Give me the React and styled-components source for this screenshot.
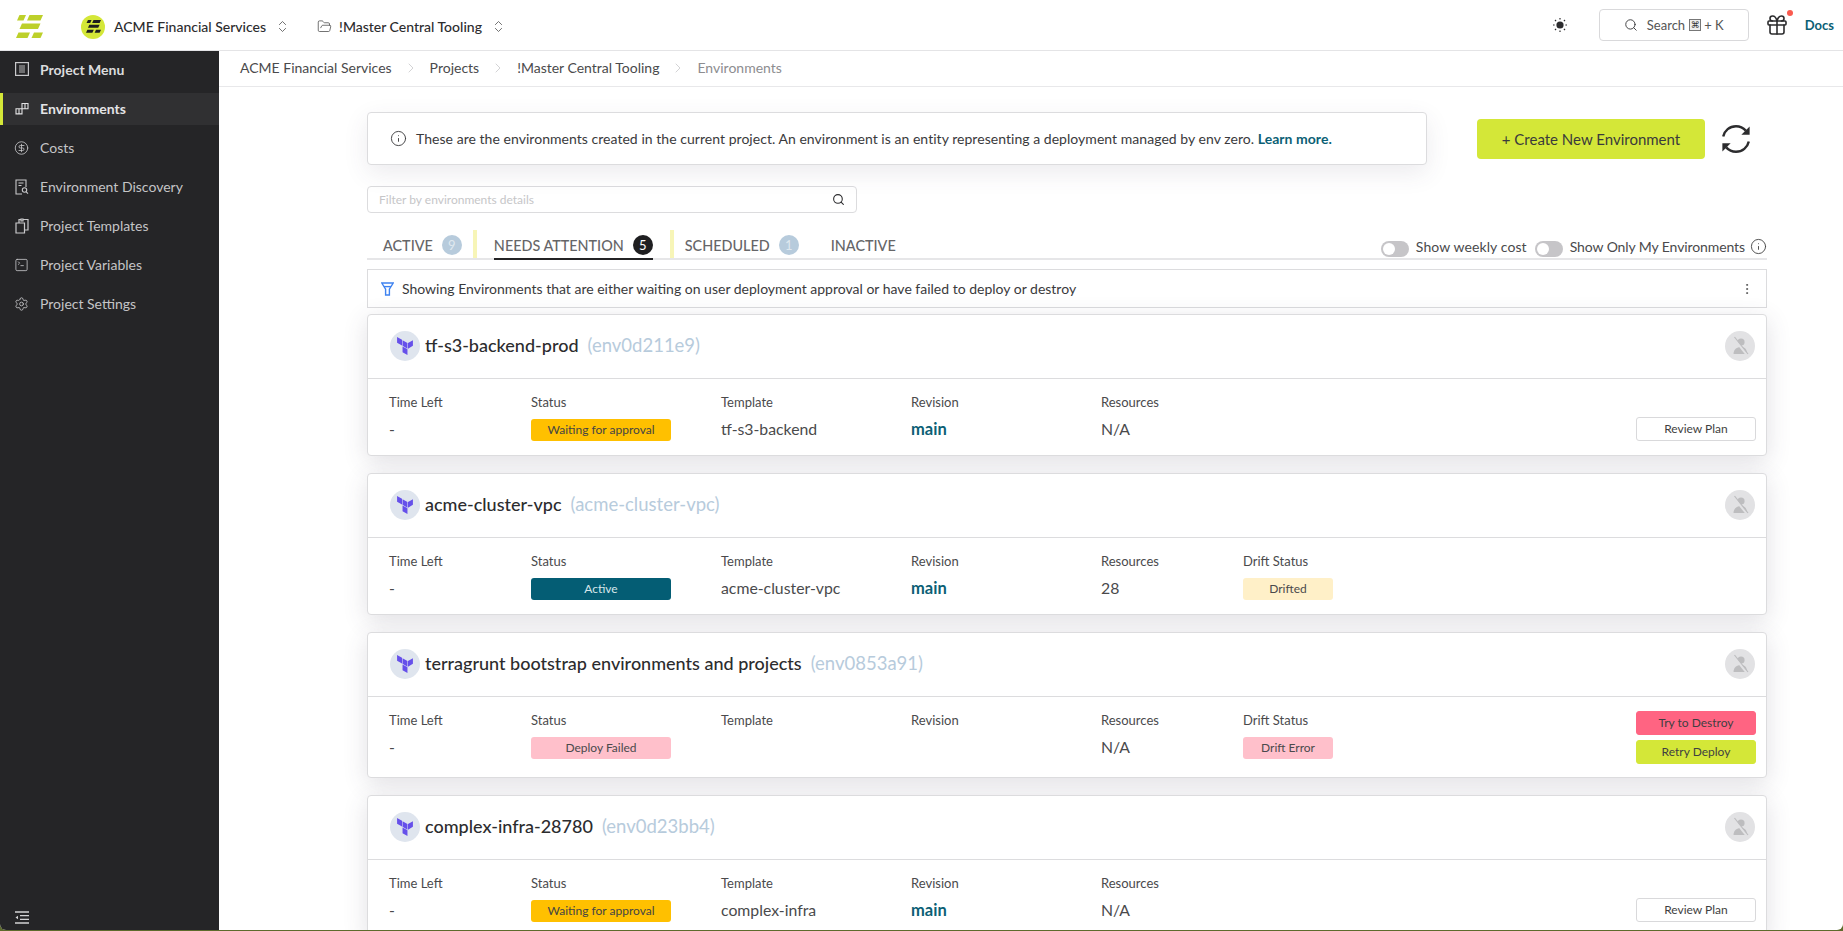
import React from 'react';
import styled, { createGlobalStyle } from 'styled-components';
import {
  ChevronRight,
  ChevronsUpDown,
  CircleDollarSign,
  EllipsisVertical,
  FolderOpen,
  Gift,
  Info,
  Search,
  Settings,
  SquareTerminal,
} from 'lucide-react';

const GlobalStyle = createGlobalStyle`
  html, body {
    margin: 0;
    height: 100%;
    overflow: hidden;
    background: #5d6b2c;
  }
  * {
    box-sizing: border-box;
  }
  body {
    font-family: Lato, "Liberation Sans", sans-serif;
    color: #2c2c2e;
  }
`;

const LogoMark = ({ size = 27, color = '#bdd02a' }) => (
  <svg width={size} height={(size * 23) / 27} viewBox="0 0 27 23" fill={color}>
    <path d="M3.5 0H10L7.5 5.5H1z" />
    <path d="M13.5 0H27l-2.5 5.5H11z" />
    <path d="M6 8.5h18.5L22 14H3.5z" />
    <path d="M2.5 17.5H14L11.5 23H0z" />
    <path d="M18 17.5h9L24.5 23H15.5z" />
  </svg>
);

const TerraformMark = () => (
  <svg width="18" height="18" viewBox="0 0 24 24" fill="#6650ea">
    <path d="M1.44 0v7.575l6.561 3.79V3.787zm21.12 4.227l-6.561 3.791v7.574l6.56-3.787zM8.72 4.23v7.575l6.561 3.787V8.018zm0 8.405v7.575L15.28 24v-7.578z" />
  </svg>
);

const NoUserMark = () => (
  <svg width="22" height="22" viewBox="0 0 22 22">
    <circle cx="12" cy="7" r="3.6" fill="#bdbdbf" />
    <path d="M4.5 19c0-4.4 3.4-7 7.5-7s6 2.6 6 7z" fill="#bdbdbf" />
    <path d="M4 2.5L18.5 20.5" stroke="#e2e2e4" strokeWidth="2.4" />
    <path d="M5.5 2L19 19" stroke="#bdbdbf" strokeWidth="1.2" />
  </svg>
);

const MenuIcon = () => (
  <svg width="14" height="14" viewBox="0 0 14 14" fill="none" stroke="#c9c9cb" strokeWidth="1.2">
    <rect x="0.6" y="0.6" width="12.8" height="12.8" />
    <path d="M4 4h6M4 6h6M4 8h6M4 10h6" strokeWidth="0.9" />
  </svg>
);

const BlocksIcon = () => (
  <svg width="14" height="14" viewBox="0 0 14 14" fill="none" stroke="#e2e2e4" strokeWidth="1.1">
    <path d="M7 1.5h6v5.2H7zM1 6.7h6v5.2H1zM7 6.7v5.2h-.1M10 1.5v5.2M4 6.7v5.2" />
  </svg>
);

const DiscoveryIcon = () => (
  <svg width="14" height="16" viewBox="0 0 14 16" fill="none" stroke="#c9c9cb" strokeWidth="1.1">
    <path d="M7 15H1V1h10v7" />
    <path d="M3.5 4h5M3.5 6.5h3" />
    <circle cx="9.5" cy="11" r="2.2" />
    <path d="M11.2 12.8l1.8 1.8" />
  </svg>
);

const TemplatesIcon = () => (
  <svg width="14" height="16" viewBox="0 0 14 16" fill="none" stroke="#c9c9cb" strokeWidth="1.2">
    <path d="M1 5h8.5v10H1z" />
    <path d="M4 5V1.5h2M8 1.5h5V12h-3.5" />
    <path d="M6 1h2v2H6z" />
  </svg>
);

const CollapseIcon = () => (
  <svg width="14" height="13" viewBox="0 0 14 13" fill="none" stroke="#d2d2d4" strokeWidth="1.3">
    <path d="M0 1h14M5 4.7h9M5 8.3h9M0 12h14" />
    <path d="M0.5 6.5L3 4.8v3.4z" fill="#d2d2d4" stroke="none" />
  </svg>
);

const SunIcon = () => (
  <svg width="14" height="14" viewBox="0 0 14 14" fill="#2c2c2e">
    <circle cx="7" cy="7" r="3.6" />
    <g stroke="#2c2c2e" strokeWidth="1.2">
      <path d="M7 0v1.6M7 12.4V14M0 7h1.6M12.4 7H14M2 2l1.1 1.1M10.9 10.9L12 12M2 12l1.1-1.1M10.9 3.1L12 2" />
    </g>
  </svg>
);

const RefreshIcon = () => (
  <svg width="30" height="30" viewBox="0 0 30 30" fill="none" stroke="#2c2c2e" strokeWidth="2.4">
    <path d="M2.2 12.5C3.5 6.5 8.6 2.2 15 2.2c3.9 0 7.4 1.7 9.8 4.4" />
    <path d="M27.8 17.5C26.5 23.5 21.4 27.8 15 27.8c-3.9 0-7.4-1.7-9.8-4.4" />
    <path d="M28.6 2.6v8.2h-8.2z" fill="#2c2c2e" stroke="none" />
    <path d="M1.4 27.4v-8.2h8.2z" fill="#2c2c2e" stroke="none" />
  </svg>
);

const FunnelIcon = () => (
  <svg width="13" height="14" viewBox="0 0 13 14" fill="none" stroke="#3f83f0" strokeWidth="1.4">
    <path d="M0.8 1h11.4L8.4 7.2v5.8H4.6V7.2z" />
    <path d="M3 4.6h7" />
  </svg>
);

const NAV_ITEMS = [
  { label: 'Environments', icon: <BlocksIcon />, active: true },
  { label: 'Costs', icon: <CircleDollarSign size={16} strokeWidth={1.3} /> },
  { label: 'Environment Discovery', icon: <DiscoveryIcon /> },
  { label: 'Project Templates', icon: <TemplatesIcon /> },
  { label: 'Project Variables', icon: <SquareTerminal size={16} strokeWidth={1.3} /> },
  { label: 'Project Settings', icon: <Settings size={16} strokeWidth={1.3} /> },
];

const CARDS = [
  {
    name: 'tf-s3-backend-prod',
    id: '(env0d211e9)',
    status: 'Waiting for approval',
    tone: 'waiting',
    template: 'tf-s3-backend',
    revision: 'main',
    resources: 'N/A',
    actions: [{ label: 'Review Plan', kind: 'plain' }],
  },
  {
    name: 'acme-cluster-vpc',
    id: '(acme-cluster-vpc)',
    status: 'Active',
    tone: 'active',
    template: 'acme-cluster-vpc',
    revision: 'main',
    resources: '28',
    drift: 'Drifted',
    driftTone: 'drifted',
    actions: [],
  },
  {
    name: 'terragrunt bootstrap environments and projects',
    id: '(env0853a91)',
    status: 'Deploy Failed',
    tone: 'failed',
    template: '',
    revision: '',
    resources: 'N/A',
    drift: 'Drift Error',
    driftTone: 'failed',
    actions: [
      { label: 'Try to Destroy', kind: 'danger' },
      { label: 'Retry Deploy', kind: 'lime' },
    ],
  },
  {
    name: 'complex-infra-28780',
    id: '(env0d23bb4)',
    status: 'Waiting for approval',
    tone: 'waiting',
    template: 'complex-infra',
    revision: 'main',
    resources: 'N/A',
    actions: [{ label: 'Review Plan', kind: 'plain' }],
  },
];

const EnvironmentCard = ({ env }) => (
  <Card>
    <CardHeader>
      <TypeCircle>
        <TerraformMark />
      </TypeCircle>
      <CardTitle>{env.name}</CardTitle>
      <CardId>{env.id}</CardId>
      <UserCircle>
        <NoUserMark />
      </UserCircle>
    </CardHeader>
    <CardBody>
      <Field $width={142}>
        <FieldLabel>Time Left</FieldLabel>
        <FieldValue>-</FieldValue>
      </Field>
      <Field $width={190}>
        <FieldLabel>Status</FieldLabel>
        <Badge $tone={env.tone} $width={140}>
          {env.status}
        </Badge>
      </Field>
      <Field $width={190}>
        <FieldLabel>Template</FieldLabel>
        <FieldValue>{env.template}</FieldValue>
      </Field>
      <Field $width={190}>
        <FieldLabel>Revision</FieldLabel>
        <RevisionValue>{env.revision}</RevisionValue>
      </Field>
      <Field $width={142}>
        <FieldLabel>Resources</FieldLabel>
        <FieldValue>{env.resources}</FieldValue>
      </Field>
      {env.drift && (
        <Field $width={142}>
          <FieldLabel>Drift Status</FieldLabel>
          <Badge $tone={env.driftTone} $width={90}>
            {env.drift}
          </Badge>
        </Field>
      )}
      <Actions $stacked={env.actions.length > 1}>
        {env.actions.map((action) => (
          <ActionButton key={action.label} $kind={action.kind}>
            {action.label}
          </ActionButton>
        ))}
      </Actions>
    </CardBody>
  </Card>
);

const App = () => (
  <>
    <GlobalStyle />
    <Frame>
      <TopBar>
        <LogoSlot>
          <LogoMark />
        </LogoSlot>
        <OrgAvatar>
          <LogoMark size={15} color="#1d1d1f" />
        </OrgAvatar>
        <TopLabel>ACME Financial Services</TopLabel>
        <Chevrons>
          <ChevronsUpDown size={15} strokeWidth={1.2} />
        </Chevrons>
        <FolderSlot>
          <FolderOpen size={15} strokeWidth={1.2} />
        </FolderSlot>
        <TopLabel>!Master Central Tooling</TopLabel>
        <Chevrons>
          <ChevronsUpDown size={15} strokeWidth={1.2} />
        </Chevrons>
        <TopRight>
          <SunIcon />
          <SearchButton>
            <SearchGlyph>
              <Search size={14} strokeWidth={1.6} />
            </SearchGlyph>
            <span>Search</span>
            <KeyCap>⌘</KeyCap>
            <span>+ K</span>
          </SearchButton>
          <GiftSlot>
            <Gift size={24} strokeWidth={1.6} />
            <GiftDot />
          </GiftSlot>
          <DocsLink>Docs</DocsLink>
        </TopRight>
      </TopBar>
      <Layout>
        <Sidebar>
          <MenuTitle>
            <NavIcon>
              <MenuIcon />
            </NavIcon>
            Project Menu
          </MenuTitle>
          {NAV_ITEMS.map((item) => (
            <NavItem key={item.label} $active={item.active}>
              <NavIcon>{item.icon}</NavIcon>
              <NavLabel>{item.label}</NavLabel>
            </NavItem>
          ))}
          <CollapseSlot>
            <CollapseIcon />
          </CollapseSlot>
        </Sidebar>
        <Main>
          <Breadcrumbs>
            <Crumb>ACME Financial Services</Crumb>
            <CrumbSep>
              <ChevronRight size={16} strokeWidth={1} />
            </CrumbSep>
            <Crumb>Projects</Crumb>
            <CrumbSep>
              <ChevronRight size={16} strokeWidth={1} />
            </CrumbSep>
            <Crumb>!Master Central Tooling</Crumb>
            <CrumbSep>
              <ChevronRight size={16} strokeWidth={1} />
            </CrumbSep>
            <Crumb $current>Environments</Crumb>
          </Breadcrumbs>
          <Content>
            <HeadRow>
              <InfoBox>
                <Info size={17} strokeWidth={1.3} />
                <span>
                  These are the environments created in the current project. An environment is an entity representing a
                  deployment managed by env zero. <LearnMore>Learn more.</LearnMore>
                </span>
              </InfoBox>
              <CreateButton>+ Create New Environment</CreateButton>
              <RefreshSlot>
                <RefreshIcon />
              </RefreshSlot>
            </HeadRow>
            <FilterBox>
              <FilterText>Filter by environments details</FilterText>
              <Search size={13} strokeWidth={2} color="#2c2c2e" />
            </FilterBox>
            <TabBar>
              <Tab $left={16}>
                ACTIVE
                <CountBadge>9</CountBadge>
              </Tab>
              <TabDivider $before={11} $after={17} />
              <Tab $active>
                NEEDS ATTENTION
                <CountBadge $dark>5</CountBadge>
              </Tab>
              <TabDivider $before={17} $after={11} />
              <Tab>
                SCHEDULED
                <CountBadge>1</CountBadge>
              </Tab>
              <Tab $left={32}>INACTIVE</Tab>
              <TabControls>
                <ToggleTrack>
                  <ToggleKnob />
                </ToggleTrack>
                <ToggleText $spacing={0.1}>Show weekly cost</ToggleText>
                <ToggleTrack $left={8}>
                  <ToggleKnob />
                </ToggleTrack>
                <ToggleText $spacing={-0.1}>Show Only My Environments</ToggleText>
                <HelpIcon>
                  <Info size={17} strokeWidth={1.3} />
                </HelpIcon>
              </TabControls>
            </TabBar>
            <Notice>
              <FunnelIcon />
              <NoticeText>
                Showing Environments that are either waiting on user deployment approval or have failed to deploy or
                destroy
              </NoticeText>
              <EllipsisVertical size={14} strokeWidth={1.6} color="#555" />
            </Notice>
            <CardList>
              {CARDS.map((env) => (
                <EnvironmentCard key={env.name} env={env} />
              ))}
            </CardList>
          </Content>
        </Main>
      </Layout>
    </Frame>
  </>
);

export default App;

const Frame = styled.div`
  display: flex;
  flex-direction: column;
  width: 1843px;
  height: 930px;
  overflow: hidden;
  background: #fff;
  border-radius: 0 0 6px 6px;
`;

const TopBar = styled.header`
  display: flex;
  align-items: center;
  flex: none;
  height: 51px;
  padding: 3px 9px 0 0;
  border-bottom: 1px solid #e4e4e6;
  background: #fff;
`;

const LogoSlot = styled.div`
  display: flex;
  align-items: center;
  width: 81px;
  padding-left: 16px;
`;

const OrgAvatar = styled.div`
  display: flex;
  align-items: center;
  justify-content: center;
  width: 24px;
  height: 24px;
  margin-right: 9px;
  border-radius: 50%;
  background: #d4e738;
`;

const TopLabel = styled.span`
  font-size: 14px;
  font-weight: 500;
  color: #2c2c2e;
  white-space: nowrap;
`;

const Chevrons = styled.span`
  display: flex;
  margin-left: 9px;
  color: #444;
`;

const FolderSlot = styled.span`
  display: flex;
  margin: 0 7px 0 27px;
  color: #444;
`;

const TopRight = styled.div`
  display: flex;
  align-items: center;
  margin: 0 0 3px auto;
`;

const SearchButton = styled.div`
  display: flex;
  align-items: center;
  justify-content: center;
  gap: 4px;
  width: 150px;
  height: 32px;
  margin-left: 32px;
  border: 1px solid #d9d9db;
  border-radius: 4px;
  font-size: 13px;
  color: #555;
`;

const SearchGlyph = styled.span`
  display: flex;
  margin-right: 5px;
  color: #3a3a3c;
`;

const KeyCap = styled.span`
  display: flex;
  align-items: center;
  justify-content: center;
  width: 12px;
  height: 12px;
  margin-right: -1px;
  border: 1px solid #777;
  background: #eee;
  font-family: "DejaVu Sans", sans-serif;
  font-size: 9px;
  color: #333;
`;

const GiftSlot = styled.div`
  position: relative;
  display: flex;
  margin-left: 16px;
  color: #2c2c2e;
`;

const GiftDot = styled.span`
  position: absolute;
  top: -3px;
  right: -4px;
  width: 6px;
  height: 6px;
  border-radius: 50%;
  background: #fa5a4f;
`;

const DocsLink = styled.span`
  margin-left: 16px;
  font-size: 13px;
  font-weight: 700;
  color: #0c5f75;
`;

const Layout = styled.div`
  display: flex;
  flex: 1;
  min-height: 0;
`;

const Sidebar = styled.aside`
  position: relative;
  flex: none;
  width: 219px;
  background: #252527;
`;

const NavIcon = styled.span`
  display: flex;
  align-items: center;
  justify-content: center;
  flex: none;
  width: 15px;
  margin-right: 11px;
`;

const NavLabel = styled.span`
  margin-bottom: 2px;
`;

const MenuTitle = styled.div`
  display: flex;
  align-items: center;
  height: 42px;
  padding: 0 0 6px 14px;
  font-size: 14px;
  font-weight: 700;
  color: #dcdcde;
`;

const NavItem = styled.div`
  display: flex;
  align-items: center;
  height: 32px;
  margin-bottom: 7px;
  padding-left: ${(p) => (p.$active ? '11px' : '14px')};
  border-left: ${(p) => (p.$active ? '3px solid #d4e738' : 'none')};
  background: ${(p) => (p.$active ? '#303032' : 'transparent')};
  font-size: 14px;
  font-weight: ${(p) => (p.$active ? 700 : 400)};
  color: ${(p) => (p.$active ? '#e4e4e6' : '#c4c4c6')};
  svg {
    color: #c9c9cb;
  }
`;

const CollapseSlot = styled.div`
  position: absolute;
  left: 15px;
  bottom: 6px;
  display: flex;
`;

const Main = styled.main`
  display: flex;
  flex-direction: column;
  flex: 1;
  min-width: 0;
`;

const Breadcrumbs = styled.nav`
  display: flex;
  align-items: center;
  flex: none;
  height: 36px;
  padding: 0 0 2px 21px;
  border-bottom: 1px solid #e8e8ea;
`;

const Crumb = styled.span`
  font-size: 14px;
  color: ${(p) => (p.$current ? '#8d8d90' : '#4a4a4c')};
`;

const CrumbSep = styled.span`
  display: flex;
  justify-content: center;
  width: 38px;
  color: #bdbdbf;
`;

const Content = styled.div`
  flex: 1;
  min-height: 0;
  padding: 25px 76px 0 148px;
`;

const HeadRow = styled.div`
  display: flex;
  align-items: center;
`;

const InfoBox = styled.div`
  display: flex;
  align-items: center;
  gap: 9px;
  width: 1060px;
  height: 53px;
  padding-left: 22px;
  border: 1px solid #dcdcde;
  border-radius: 4px;
  background: #fff;
  box-shadow: 0 8px 24px rgba(70, 60, 90, 0.1);
  font-size: 14px;
  letter-spacing: 0.04px;
  color: #3a3a3c;
`;

const LearnMore = styled.span`
  font-weight: 700;
  color: #0c5f75;
`;

const CreateButton = styled.button`
  width: 228px;
  height: 40px;
  margin-left: 50px;
  border: none;
  border-radius: 4px;
  background: #d4e738;
  font: inherit;
  font-size: 15px;
  color: #3a3a3c;
`;

const RefreshSlot = styled.span`
  display: flex;
  margin-left: 16px;
`;

const FilterBox = styled.div`
  display: flex;
  align-items: center;
  justify-content: space-between;
  width: 490px;
  height: 27px;
  margin-top: 21px;
  padding: 0 11px;
  border: 1px solid #dcdcde;
  border-radius: 4px;
`;

const FilterText = styled.span`
  font-size: 12px;
  color: #c6c6c8;
`;

const TabBar = styled.div`
  display: flex;
  height: 30px;
  margin-top: 17px;
  border-bottom: 2px solid #e6e6e8;
`;

const Tab = styled.div`
  display: flex;
  align-items: center;
  gap: 9px;
  margin-left: ${(p) => p.$left || 0}px;
  margin-bottom: -2px;
  padding-top: 2px;
  border-bottom: 2px solid ${(p) => (p.$active ? '#232325' : 'transparent')};
  font-size: 14.4px;
  font-weight: 500;
  color: #666668;
`;

const CountBadge = styled.span`
  display: flex;
  align-items: center;
  justify-content: center;
  width: 20px;
  height: 20px;
  border-radius: 50%;
  background: ${(p) => (p.$dark ? '#1f1f21' : '#b7cbdc')};
  font-size: 13px;
  font-weight: 400;
  color: ${(p) => (p.$dark ? '#fff' : '#dfe8ef')};
`;

const TabDivider = styled.span`
  width: 4px;
  margin: 0 ${(p) => p.$after}px 0 ${(p) => p.$before}px;
  background: #f7f5b7;
`;

const TabControls = styled.div`
  display: flex;
  align-items: flex-start;
  margin-left: auto;
  padding-top: 11px;
`;

const ToggleTrack = styled.span`
  display: flex;
  align-items: center;
  width: 28px;
  height: 16px;
  margin-left: ${(p) => p.$left || 0}px;
  padding-left: 2px;
  border-radius: 8px;
  background: #c6c5c8;
`;

const ToggleKnob = styled.span`
  width: 12px;
  height: 12px;
  border-radius: 50%;
  background: #fff;
`;

const ToggleText = styled.span`
  margin: -1px 0 0 7px;
  line-height: 14px;
  font-size: 14px;
  letter-spacing: ${(p) => p.$spacing}px;
  color: #4a4a4c;
`;

const HelpIcon = styled.span`
  display: flex;
  margin: -3px 0 0 5px;
  color: #444;
`;

const Notice = styled.div`
  display: flex;
  align-items: center;
  height: 39px;
  margin-top: 9px;
  padding: 0 12px 0 13px;
  border: 1px solid #dcdcde;
  background: #fff;
`;

const NoticeText = styled.span`
  flex: 1;
  margin-left: 8px;
  font-size: 14px;
  color: #3a3a3c;
`;

const CardList = styled.div`
  display: flex;
  flex-direction: column;
  gap: 17px;
  margin-top: 6px;
`;

const Card = styled.article`
  border: 1px solid #dcdcde;
  border-radius: 4px;
  background: #fff;
  box-shadow: 0 6px 24px rgba(70, 60, 90, 0.16);
`;

const CardHeader = styled.div`
  display: flex;
  align-items: center;
  height: 64px;
  padding: 0 11px 1px 22px;
  border-bottom: 1px solid #dcdcde;
`;

const TypeCircle = styled.span`
  display: flex;
  align-items: center;
  justify-content: center;
  width: 30px;
  height: 30px;
  border-radius: 50%;
  background: #dfe5ee;
`;

const CardTitle = styled.span`
  margin: 0 0 3px 5px;
  font-size: 18px;
  font-weight: 500;
  color: #2c2c2e;
`;

const CardId = styled.span`
  margin: 0 0 3px 9px;
  font-size: 18.5px;
  color: #b7cbdc;
`;

const UserCircle = styled.span`
  display: flex;
  align-items: center;
  justify-content: center;
  width: 30px;
  height: 30px;
  margin-left: auto;
  border-radius: 50%;
  background: #e2e2e4;
`;

const CardBody = styled.div`
  display: flex;
  padding: 14px 10px 14px 21px;
`;

const Field = styled.div`
  flex: none;
  width: ${(p) => p.$width}px;
  padding-top: 1px;
`;

const FieldLabel = styled.div`
  height: 16px;
  margin-bottom: 9px;
  line-height: 16px;
  font-size: 13px;
  color: #4a4a4c;
`;

const FieldValue = styled.div`
  height: 22px;
  line-height: 19px;
  font-size: 15.8px;
  color: #4a4a4c;
`;

const RevisionValue = styled(FieldValue)`
  padding-top: 1px;
  font-size: 16.5px;
  font-weight: 700;
  color: #0c5f75;
`;

const BADGE_TONES = {
  waiting: { background: '#ffc000', color: '#444' },
  active: { background: '#045d74', color: '#d7e6ea' },
  failed: { background: '#ffc0cb', color: '#4a4a4c' },
  drifted: { background: '#fff0c8', color: '#4a4a4c' },
};

const Badge = styled.div`
  width: ${(p) => p.$width}px;
  height: 22px;
  border-radius: 3px;
  background: ${(p) => BADGE_TONES[p.$tone].background};
  line-height: 22px;
  text-align: center;
  font-size: 12px;
  color: ${(p) => BADGE_TONES[p.$tone].color};
`;

const Actions = styled.div`
  display: flex;
  flex-direction: column;
  justify-content: flex-end;
  gap: 5px;
  margin: 0 0 ${(p) => (p.$stacked ? '-1px' : '0')} auto;
`;

const ACTION_KINDS = {
  plain: { background: '#fff', border: '#d9d9db' },
  danger: { background: '#ff6482', border: '#ff6482' },
  lime: { background: '#d4e738', border: '#d4e738' },
};

const ActionButton = styled.button`
  width: 120px;
  height: 24px;
  padding: 0 0 2px;
  border: 1px solid ${(p) => ACTION_KINDS[p.$kind].border};
  border-radius: 3px;
  background: ${(p) => ACTION_KINDS[p.$kind].background};
  font: inherit;
  font-size: 12px;
  color: #3f3f41;
`;
